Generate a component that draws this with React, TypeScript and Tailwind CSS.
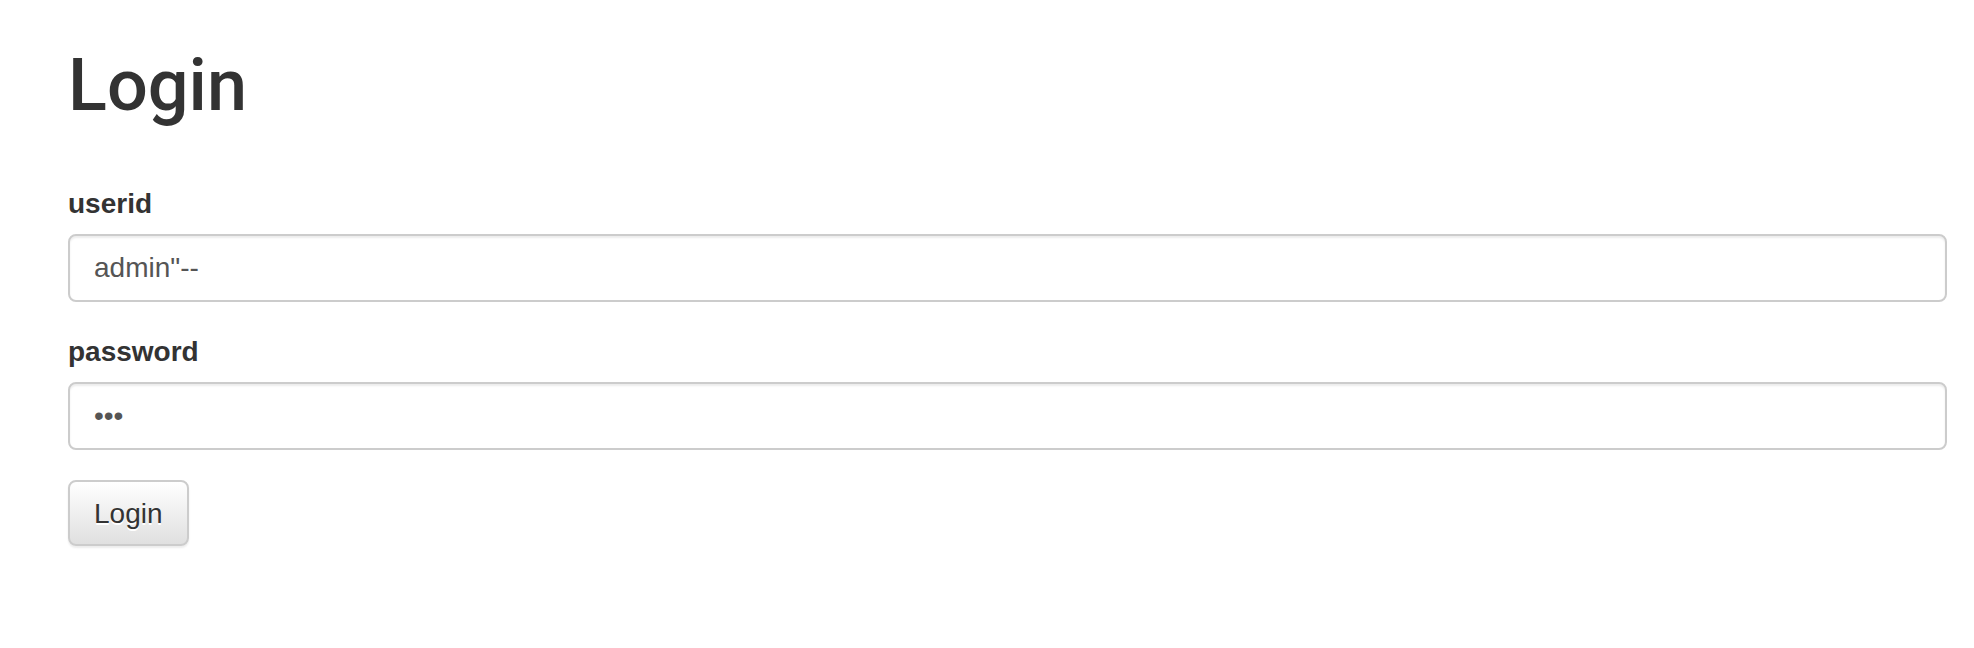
import React from "react";

export default function App() {
  return (
    <div
      className="min-h-[648px] w-full bg-white pl-[68px] pr-[27px] text-[#333]"
      style={{ fontFamily: '"Liberation Sans", Arial, sans-serif' }}
    >
      <h1
        className="pt-[46px] text-[72px] leading-[79px] font-medium m-0"
        style={{ fontFamily: 'Roboto, "Liberation Sans", Arial, sans-serif' }}
      >
        Login
      </h1>
      <form className="mt-[59px]" onSubmit={(e) => e.preventDefault()}>
        <div className="mb-[30px]">
          <label className="block text-[28px] leading-[40px] font-bold mb-[10px]">userid</label>
          <input
            type="text"
            readOnly
            defaultValue={'admin"--'}
            className="block w-full h-[68px] px-[24px] text-[28px] text-[#555] bg-white border-2 border-[#ccc] rounded-[8px] shadow-[inset_0_2px_2px_rgba(0,0,0,0.075)] outline-none"
            style={{ fontFamily: '"Liberation Sans", Arial, sans-serif' }}
          />
        </div>
        <div className="mb-[30px]">
          <label className="block text-[28px] leading-[40px] font-bold mb-[10px]">password</label>
          <input
            type="password"
            readOnly
            defaultValue="abc"
            className="block w-full h-[68px] px-[24px] text-[28px] text-[#555] bg-white border-2 border-[#ccc] rounded-[8px] shadow-[inset_0_2px_2px_rgba(0,0,0,0.075)] outline-none"
            style={{ fontFamily: '"Liberation Sans", Arial, sans-serif' }}
          />
        </div>
        <button
          type="submit"
          className="h-[66px] px-[24px] pt-[2px] text-[28px] leading-[40px] text-[#333] border-2 border-[#ccc] rounded-[8px] bg-gradient-to-b from-white to-[#e0e0e0] shadow-[inset_0_2px_0_rgba(255,255,255,0.15),0_2px_2px_rgba(0,0,0,0.075)] [text-shadow:0_2px_0_#fff]"
          style={{ fontFamily: '"Liberation Sans", Arial, sans-serif' }}
        >
          Login
        </button>
      </form>
    </div>
  );
}
